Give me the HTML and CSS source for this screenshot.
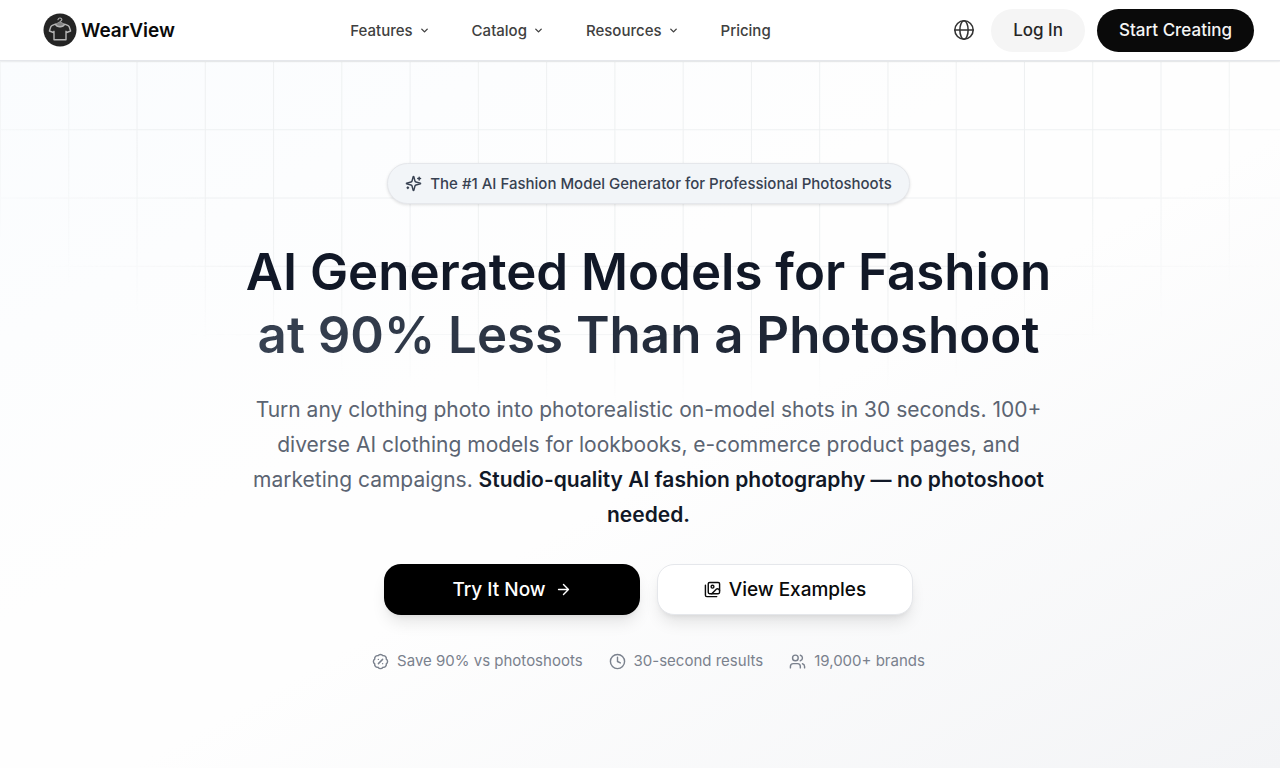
FILE: index.html
```html
<!DOCTYPE html>
<html lang="en">
<head>
<meta charset="utf-8">
<meta name="viewport" content="width=device-width, initial-scale=1">
<title>WearView</title>
<link rel="stylesheet" href="styles.css">
</head>
<body>
<header class="header">
  <a class="brand" href="#">
    <svg class="brand-mark" viewBox="0 0 34 34" fill="none" aria-hidden="true">
      <circle cx="17" cy="17" r="16.5" fill="#242424"/>
      <path class="hook" d="M15 6.600c.4-1.200 1.200-1.700 2.100-1.600 1.100.1 1.800.9 1.700 1.800-.1.900-1.700 1.200-1.700 2.600"/>
      <path class="collar" d="M12.600 11.200 17 8.800l4.400 2.400c-1.200 3.400-7.600 3.400-8.800 0Z"/>
      <path class="shirt" d="M12.400 11.200 9.300 12.300Q8.200 12.700 7.800 13.800L6.400 18l4 1.500.6-1.200v8.500h12v-8.500l.6 1.200 4-1.500-1.400-4.200Q25.800 12.700 24.700 12.300l-3.100-1.100c-1.400 3.400-7.800 3.400-9.200 0Z"/>
    </svg>
    <span>WearView</span>
  </a>
  <nav class="nav" aria-label="Main">
    <button class="nav-item" type="button">Features <svg class="chevron" viewBox="0 0 24 24"><path d="m6 9 6 6 6-6"/></svg></button>
    <button class="nav-item" type="button">Catalog <svg class="chevron" viewBox="0 0 24 24"><path d="m6 9 6 6 6-6"/></svg></button>
    <button class="nav-item" type="button">Resources <svg class="chevron" viewBox="0 0 24 24"><path d="m6 9 6 6 6-6"/></svg></button>
    <a class="nav-item" href="#">Pricing</a>
  </nav>
  <div class="actions">
    <button class="globe" type="button" aria-label="Language"><svg viewBox="0 0 24 24"><circle cx="12" cy="12" r="10"/><ellipse cx="12" cy="12" rx="4.500" ry="10"/><path d="M2 12h20"/></svg></button>
    <a class="pill pill-light" href="#">Log In</a>
    <a class="pill pill-dark" href="#">Start Creating</a>
  </div>
</header>
<main class="hero">
  <p class="badge">
    <svg viewBox="0 0 24 24" aria-hidden="true"><path d="M9.940 15.500A2 2 0 0 0 8.500 14.060l-6.140-1.580a.5.5 0 0 1 0-.96L8.500 9.940A2 2 0 0 0 9.940 8.500l1.580-6.140a.5.5 0 0 1 .96 0l1.580 6.140a2 2 0 0 0 1.440 1.440l6.140 1.580a.5.5 0 0 1 0 .96l-6.140 1.580a2 2 0 0 0-1.440 1.440l-1.580 6.140a.5.5 0 0 1-.96 0zM20 3v4M22 5h-4M4 17v2M5 18H3"/></svg>
    The #1 AI Fashion Model Generator for Professional Photoshoots
  </p>
  <h1 class="title">AI Generated Models for Fashion <span class="title-accent">at 90% Less Than a Photoshoot</span></h1>
  <p class="lead">Turn any clothing photo into photorealistic on-model shots in 30 seconds. 100+ diverse AI clothing models for lookbooks, e-commerce product pages, and marketing campaigns. <strong>Studio-quality AI fashion photography — no photoshoot needed.</strong></p>
  <div class="cta-row">
    <a class="cta cta-dark" href="#">Try It Now <svg viewBox="0 0 24 24" aria-hidden="true"><path d="M5 12h14M12 5l7 7-7 7"/></svg></a>
    <a class="cta cta-light" href="#"><svg viewBox="0 0 24 24" aria-hidden="true"><path d="M18 22H4a2 2 0 0 1-2-2V6"/><path d="m22 13-1.300-1.300a2.400 2.400 0 0 0-3.400 0L11 18"/><circle cx="12" cy="8" r="2"/><rect width="16" height="16" x="6" y="2" rx="2"/></svg> View Examples</a>
  </div>
  <ul class="facts">
    <li><svg viewBox="0 0 24 24" aria-hidden="true"><path d="M3.850 8.620a4 4 0 0 1 4.780-4.770 4 4 0 0 1 6.740 0 4 4 0 0 1 4.780 4.780 4 4 0 0 1 0 6.740 4 4 0 0 1-4.770 4.780 4 4 0 0 1-6.750 0 4 4 0 0 1-4.780-4.770 4 4 0 0 1 0-6.760ZM15 9l-6 6M9 9h.01M15 15h.01"/></svg>Save 90% vs photoshoots</li>
    <li><svg viewBox="0 0 24 24" aria-hidden="true"><circle cx="12" cy="12" r="10"/><path d="M12 6v6l4 2"/></svg>30-second results</li>
    <li><svg viewBox="0 0 24 24" aria-hidden="true"><path d="M16 21v-2a4 4 0 0 0-4-4H6a4 4 0 0 0-4 4v2"/><circle cx="9" cy="7" r="4"/><path d="M22 21v-2a4 4 0 0 0-3-3.870M16 3.130a4 4 0 0 1 0 7.750"/></svg>19,000+ brands</li>
  </ul>
</main>
</body>
</html>
```
FILE: styles.css
```css
* { box-sizing: border-box; }
body {
  margin: 0;
  min-height: 100vh;
  display: flex;
  flex-direction: column;
  font-family: Inter, "Liberation Sans", sans-serif;
  color: #111827;
  background: #fff;
}
a { color: inherit; text-decoration: none; }
button { font: inherit; color: inherit; background: none; border: 0; padding: 0; cursor: pointer; }
svg { flex: none; fill: none; stroke: currentColor; stroke-width: 2; stroke-linecap: round; stroke-linejoin: round; }

.header {
  display: grid;
  grid-template-columns: 1fr auto 1fr;
  align-items: center;
  height: 61px;
  padding: 0 26px 0 43px;
  border-bottom: 1px solid #e5e7eb;
  box-shadow: 0 1px 2px rgba(0, 0, 0, .05);
  background: #fff;
  z-index: 1;
}
.brand { display: flex; align-items: center; gap: 4px; font-size: 19px; font-weight: 600; color: #0a0a0a; }
.brand-mark { width: 34px; height: 34px; stroke: none; }
.hook { stroke: #aaa; stroke-width: 1.2; }
.collar { fill: #808080; stroke: #999; stroke-width: 1; }
.shirt { stroke: #b5b5b5; stroke-width: 1.4; }
.nav { display: flex; gap: 42px; margin-right: 176px; }
.nav-item { display: flex; align-items: center; gap: 6px; font-size: 15px; font-weight: 500; color: #404040; white-space: nowrap; }
.chevron { width: 11px; height: 11px; stroke-width: 3; }
.actions { display: flex; align-items: center; justify-content: flex-end; gap: 12px; }
.globe { display: flex; margin-right: 4px; color: #333; }
.globe svg { width: 22px; height: 22px; stroke-width: 1.7; }
.pill { display: flex; align-items: center; height: 43px; padding: 0 22px; border-radius: 22px; font-size: 17px; font-weight: 500; white-space: nowrap; }
.pill-light { background: #f5f5f5; color: #262626; }
.pill-dark { background: #0a0a0a; color: #f5f5f5; }

.hero {
  position: relative;
  flex: 1;
  display: flex;
  flex-direction: column;
  align-items: center;
  padding: 102px 24px 96px 41px;
  text-align: center;
  background: linear-gradient(to bottom right, #fafcfe, #fefefe 40%, #fefefe 55%, #f3f4f6);
}
.hero::before {
  content: "";
  position: absolute;
  inset: 0;
  background-image:
    linear-gradient(to right, #eef0f1 1px, transparent 1px),
    linear-gradient(to bottom, #eef0f1 1px, transparent 1px);
  background-size: calc(100% * 4 / 75) calc(100vw * 4 / 75);
  -webkit-mask-image: radial-gradient(ellipse 60% 345px at 51% 0, #000 70%, transparent 100%);
  mask-image: radial-gradient(ellipse 60% 345px at 51% 0, #000 70%, transparent 100%);
}
.hero > * { position: relative; }
.badge {
  display: flex;
  align-items: center;
  gap: 8px;
  margin: 0 0 36px;
  padding: 0 17px;
  min-height: 41px;
  border: 1px solid #e5e7eb;
  border-radius: 21px;
  background: #f2f5f8;
  box-shadow: 0 1px 3px rgba(0, 0, 0, .12);
  font-size: 15px;
  font-weight: 500;
  color: #374151;
}
.badge svg { width: 17px; height: 17px; }
.title { margin: 0 0 26px; font-size: 51px; line-height: 63px; font-weight: 600; color: #111827; }
.title-accent {
  display: block;
  width: fit-content;
  margin: 0 auto;
  background: linear-gradient(to right, #374151, #111827);
  -webkit-background-clip: text;
  background-clip: text;
  color: transparent;
}
.lead { max-width: 820px; margin: 0 0 32px; font-size: 21px; line-height: 35px; color: #5b6472; }
.lead strong { font-weight: 600; color: #111827; }
.cta-row { display: flex; gap: 17px; margin-bottom: 34px; }
.cta {
  display: flex;
  align-items: center;
  justify-content: center;
  width: 256px;
  height: 51px;
  border-radius: 17px;
  font-size: 19px;
  font-weight: 500;
  box-shadow: 0 10px 16px -3px rgba(0, 0, 0, .1), 0 4px 6px -4px rgba(0, 0, 0, .1);
}
.cta-dark { gap: 9px; background: #000; color: #fff; }
.cta-light { gap: 8px; background: #fff; color: #0a0a0a; border: 1px solid #e5e7eb; }
.cta svg { width: 17px; height: 17px; }
.facts { display: flex; gap: 26px; margin: 0; padding: 0; list-style: none; font-size: 15px; line-height: 24px; color: #7a818d; }
.facts li { display: flex; align-items: center; gap: 8px; white-space: nowrap; }
.facts svg { width: 17px; height: 17px; }
```
